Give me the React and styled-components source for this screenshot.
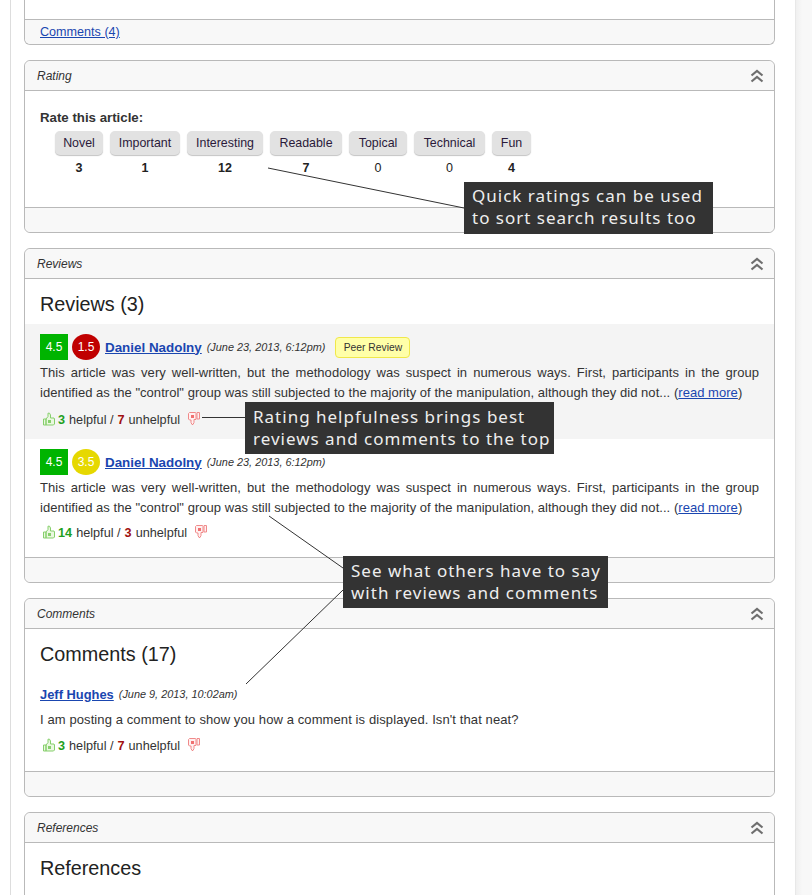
import React from 'react'
import styled, { createGlobalStyle } from 'styled-components'

const GlobalStyle = createGlobalStyle`
    html, body {
        margin: 0;
        background: #fff;
    }
    body {
        font-family: "Liberation Sans", Arial, sans-serif;
        font-size: 12px;
        color: #222;
    }
`

const Page = styled.div`
    position: relative;
    width: 812px;
    height: 895px;
    overflow: hidden;
    display: flex;
    background: #fff;
`

const Sheet = styled.main`
    box-sizing: border-box;
    flex: none;
    width: 786px;
    height: 895px;
    margin-left: 10px;
    padding: 0 20px 0 13px;
    border-left: 1px solid #ddd;
    border-right: 1px solid #e8e8e8;
    display: flex;
    flex-direction: column;
    gap: 15px;
`

const Gutter = styled.div`
    flex: 1;
    background: linear-gradient(to right, #f0f0f0, #f8f8f8 40%);
`

const Card = styled.section`
    flex: none;
    box-sizing: border-box;
    width: 751px;
    border: 1px solid #b9b9b9;
    border-radius: 6px;
    background: #fff;
    ${p => p.$cutTop && `
        border-top: 0;
        border-radius: 0 0 6px 6px;
    `}
`

const Header = styled.header`
    box-sizing: border-box;
    height: 30px;
    padding: 0 10px 0 12px;
    display: flex;
    align-items: center;
    justify-content: space-between;
    background: #f8f8f8;
    border-bottom: 1px solid #b9b9b9;
    border-radius: 6px 6px 0 0;
    font-style: italic;
    color: #333;
`

const Footer = styled.footer`
    box-sizing: border-box;
    height: 25px;
    padding: 0 15px;
    display: flex;
    align-items: center;
    background: #f8f8f8;
    border-top: 1px solid #b9b9b9;
    border-radius: 0 0 6px 6px;
    font-size: 12.6px;
`

const Body = styled.div`
    box-sizing: border-box;
    height: ${p => p.$height}px;
    padding: ${p => p.$pad || '0 15px'};
    overflow: hidden;
`

const Link = styled.a`
    color: #1a46b0;
    text-decoration: underline;
`

const RateLabel = styled.div`
    font-weight: bold;
    font-size: 13.25px;
    line-height: 16px;
    color: #333;
`

const RatingRow = styled.div`
    display: flex;
    gap: 7px;
    margin: 5px 0 0 15px;
`

const RatingColumn = styled.div`
    display: flex;
    flex-direction: column;
    align-items: center;
`

const RatingButton = styled.div`
    box-sizing: border-box;
    width: ${p => p.$width}px;
    height: 24px;
    display: flex;
    align-items: center;
    justify-content: center;
    background: #e2e2e2;
    border-radius: 5px;
    box-shadow: 0 1px 1px #c4c4c4;
    font-size: 12.4px;
    color: #2a1a3a;
`

const RatingCount = styled.div`
    margin-top: 6px;
    line-height: 15px;
    font-size: 12.5px;
    font-weight: ${p => (p.$count > 0 ? 'bold' : 'normal')};
    color: #222;
`

const SectionTitle = styled.h2`
    margin: 0;
    font-size: 19.8px;
    font-weight: normal;
    line-height: 24px;
    color: #222;
`

const Entry = styled.article`
    box-sizing: border-box;
    height: ${p => p.$height}px;
    padding: 10px 15px 0;
    background: ${p => (p.$shaded ? '#f4f4f4' : '#fff')};
`

const Byline = styled.div`
    height: 26px;
    margin-top: ${p => p.$top || 0}px;
    display: flex;
    align-items: center;
`

const ScoreSquare = styled.div`
    width: 28px;
    height: 26px;
    margin-right: 4px;
    display: flex;
    align-items: center;
    justify-content: center;
    background: #00b400;
    color: #fff;
`

const ScoreRound = styled.div`
    width: 28px;
    height: 26px;
    margin-right: 5px;
    display: flex;
    align-items: center;
    justify-content: center;
    border-radius: 50%;
    background: ${p => p.$bg};
    color: #fff;
`

const Author = styled(Link)`
    font-size: ${p => p.$size}px;
    font-weight: bold;
`

const DateText = styled.span`
    margin-left: 5px;
    font-size: 10.9px;
    font-style: italic;
    color: #333;
`

const PeerBadge = styled.span`
    box-sizing: border-box;
    width: 75px;
    height: 21px;
    margin-left: 10px;
    display: flex;
    align-items: center;
    justify-content: center;
    background: #ffffa8;
    border: 1px solid #f0e84a;
    border-radius: 4px;
    font-size: 10.3px;
    color: #333;
`

const Paragraph = styled.p`
    margin: 3px 0 0;
    font-size: 13px;
    letter-spacing: ${p => (p.$justify ? 0.04 : 0.1)}px;
    line-height: 20px;
    text-align: ${p => (p.$justify ? 'justify' : 'left')};
    color: #333;
`

const Votes = styled.div`
    margin: ${p => p.$top}px 0 0 3px;
    height: 16px;
    display: flex;
    align-items: center;
    font-size: 12.7px;
    color: #333;
`

const Thumb = styled.svg`
    flex: none;
    width: 12px;
    height: 14px;
    margin: ${p => (p.$down ? '-3px 0 0 8px' : '-2px 3px 0 0')};
`

const Count = styled.b`
    color: ${p => p.$color};
    margin-right: 4px;
`

const Slash = styled.span`
    margin-right: 4px;
`

const Callout = styled.div`
    position: absolute;
    left: ${p => p.$left}px;
    top: ${p => p.$top}px;
    box-sizing: border-box;
    width: ${p => p.$width}px;
    height: 52px;
    padding: ${p => p.$padTop}px 8px 0;
    background: #333;
    color: #eee;
    font-family: "Noto Sans", "Open Sans", sans-serif;
    font-size: 17px;
    line-height: 22px;
    letter-spacing: 1px;
    white-space: nowrap;
`

const Leaders = styled.svg`
    position: absolute;
    left: 0;
    top: 0;
    width: 812px;
    height: 895px;
    pointer-events: none;
`

const Collapse = () => (
    <svg width="14" height="14" viewBox="0 0 14 14" fill="none" stroke="#6f6f6f" strokeWidth="2.2">
        <path d="M1.5 6.5 7 2l5.5 4.5" />
        <path d="M1.5 12.5 7 8l5.5 4.5" />
    </svg>
)

const ThumbUp = () => (
    <Thumb viewBox="0 0 12 14">
        <path d="M.5 7h2.5v6H.5zM3 7l2-2.5V1.200h1.500L7.500 3v3h3.500l.500 1v5l-1 1H3z" fill="#eaf8e0" stroke="#86cf6c" />
        <rect x="5" y="8" width="3" height="3" fill="#86cf6c" />
    </Thumb>
)

const ThumbDown = () => (
    <Thumb $down viewBox="0 0 12 14">
        <path d="M.5 1.500 1.500.5h6l.5 1v6H6v3l-1 2H4l-1-2V8H1.500l-1-1z" fill="#fff0f0" stroke="#f08a8a" />
        <path d="M9 .5h2.500v6.500H9z" fill="#fff0f0" stroke="#f08a8a" />
        <rect x="3" y="3" width="3" height="3" fill="#f07070" />
    </Thumb>
)

const VoteLine = ({ up, down, top }) => (
    <Votes $top={top}>
        <ThumbUp />
        <Count $color="#1fa01f">{up}</Count>
        <Slash>helpful /</Slash>
        <Count $color="#a01010">{down}</Count>
        unhelpful
        <ThumbDown />
    </Votes>
)

const Panel = ({ title, bodyHeight, bodyPad, children }) => (
    <Card>
        <Header>
            {title}
            <Collapse />
        </Header>
        <Body $height={bodyHeight} $pad={bodyPad}>{children}</Body>
        <Footer />
    </Card>
)

const ratings = [
    { label: 'Novel', count: 3, width: 48 },
    { label: 'Important', count: 1, width: 70 },
    { label: 'Interesting', count: 12, width: 76 },
    { label: 'Readable', count: 7, width: 72 },
    { label: 'Topical', count: 0, width: 58 },
    { label: 'Technical', count: 0, width: 71 },
    { label: 'Fun', count: 4, width: 39 },
]

const reviews = [
    { second: '1.5', secondBg: '#c00000', peer: true, up: 3, down: 7, shaded: true, votesTop: 9, height: 115 },
    { second: '3.5', secondBg: '#e6d800', peer: false, up: 14, down: 3, shaded: false, votesTop: 7, height: 118 },
]

const App = () => {
    return (
        <Page>
            <GlobalStyle />
            <Sheet>
                <Card $cutTop>
                    <Body $height={19} />
                    <Footer><Link>Comments (4)</Link></Footer>
                </Card>

                <Panel title="Rating" bodyHeight={116} bodyPad="19px 15px 0">
                    <RateLabel>Rate this article:</RateLabel>
                    <RatingRow>
                        {ratings.map(r => (
                            <RatingColumn key={r.label}>
                                <RatingButton $width={r.width}>{r.label}</RatingButton>
                                <RatingCount $count={r.count}>{r.count}</RatingCount>
                            </RatingColumn>
                        ))}
                    </RatingRow>
                </Panel>

                <Panel title="Reviews" bodyHeight={278} bodyPad="0">
                    <Body $height={45} $pad="13px 15px 0">
                        <SectionTitle>Reviews (3)</SectionTitle>
                    </Body>
                    {reviews.map(r => (
                        <Entry key={r.second} $shaded={r.shaded} $height={r.height}>
                            <Byline>
                                <ScoreSquare>4.5</ScoreSquare>
                                <ScoreRound $bg={r.secondBg}>{r.second}</ScoreRound>
                                <Author $size={13.4}>Daniel Nadolny</Author>
                                <DateText>(June 23, 2013, 6:12pm)</DateText>
                                {r.peer && <PeerBadge>Peer Review</PeerBadge>}
                            </Byline>
                            <Paragraph $justify>
                                This article was very well-written, but the methodology was suspect in numerous ways. First, participants in the group identified as the "control" group was still subjected to the majority of the manipulation, although they did not... (<Link>read more</Link>)
                            </Paragraph>
                            <VoteLine up={r.up} down={r.down} top={r.votesTop} />
                        </Entry>
                    ))}
                </Panel>

                <Panel title="Comments" bodyHeight={142} bodyPad="13px 15px 0">
                    <SectionTitle>Comments (17)</SectionTitle>
                    <Byline $top={15}>
                        <Author $size={12.9}>Jeff Hughes</Author>
                        <DateText>(June 9, 2013, 10:02am)</DateText>
                    </Byline>
                    <Paragraph>I am posting a comment to show you how a comment is displayed. Isn't that neat?</Paragraph>
                    <VoteLine up={3} down={7} top={8} />
                </Panel>

                <Card>
                    <Header>
                        References
                        <Collapse />
                    </Header>
                    <Body $height={60} $pad="13px 15px 0">
                        <SectionTitle>References</SectionTitle>
                    </Body>
                </Card>
            </Sheet>
            <Gutter />

            <Leaders viewBox="0 0 812 895">
                <g stroke="#333" strokeWidth="1" fill="none">
                    <path d="M268 168 464 208" />
                    <path d="M202 417.500H245" />
                    <path d="M269 516 343 568" />
                    <path d="M246 684 343 590" />
                </g>
            </Leaders>

            <Callout $left={464} $top={182} $width={249} $padTop={3}>Quick ratings can be used<br />to sort search results too</Callout>
            <Callout $left={245} $top={402} $width={309} $padTop={4}>Rating helpfulness brings best<br />reviews and comments to the top</Callout>
            <Callout $left={343} $top={556} $width={265} $padTop={4}>See what others have to say<br />with reviews and comments</Callout>
        </Page>
    )
}

export default App
